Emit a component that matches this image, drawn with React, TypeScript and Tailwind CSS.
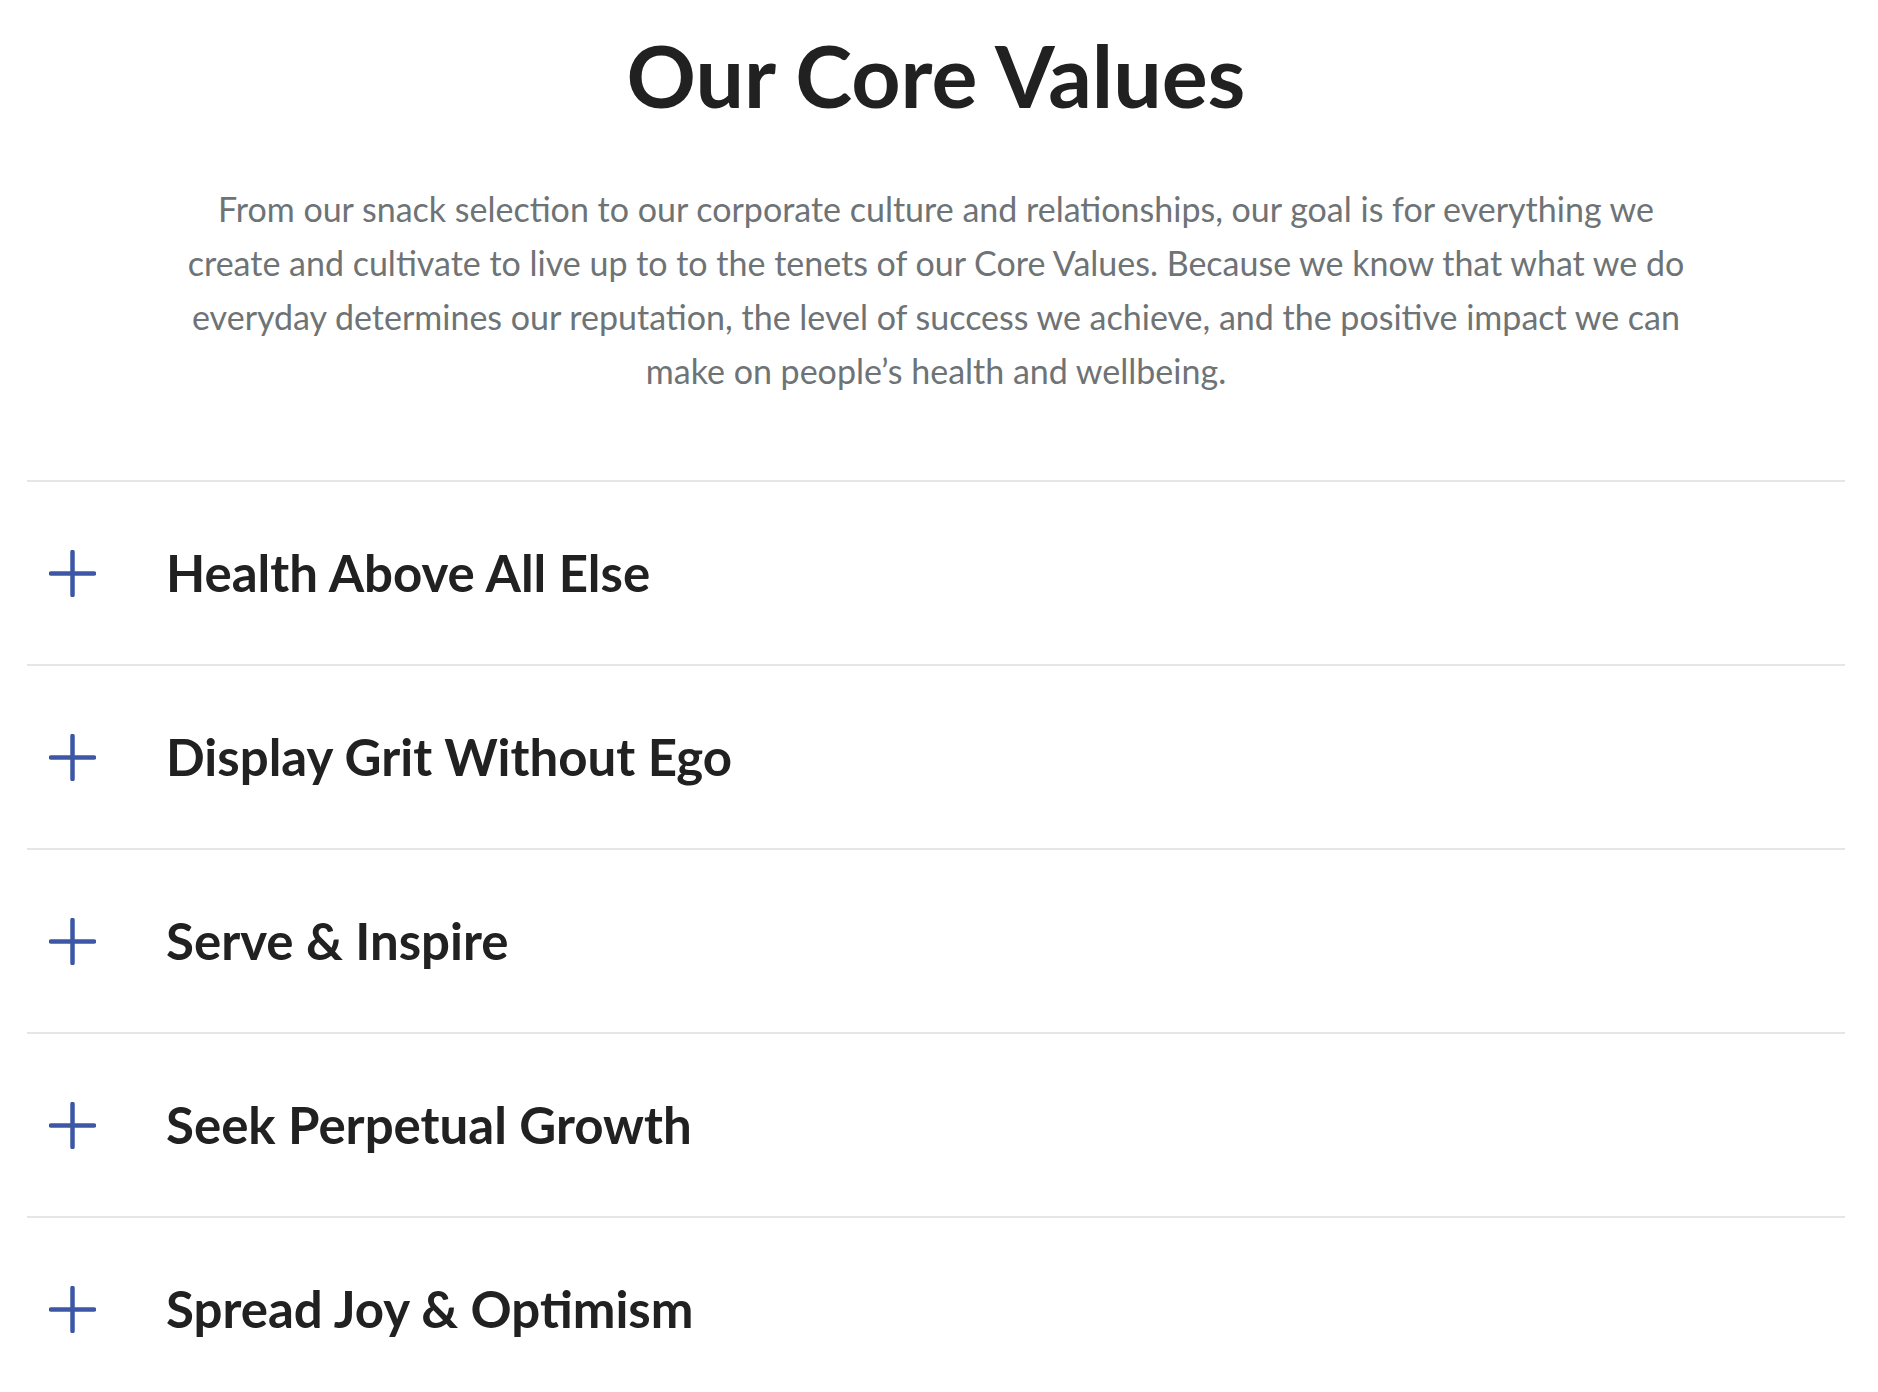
import React from 'react';

const values = [
  'Health Above All Else',
  'Display Grit Without Ego',
  'Serve & Inspire',
  'Seek Perpetual Growth',
  'Spread Joy & Optimism',
];

function PlusIcon() {
  return (
    <svg width="47" height="47" viewBox="0 0 47 47" className="shrink-0">
      <path d="M23.5 2v43M2 23.5h43" stroke="#3d57a6" strokeWidth="4.5" strokeLinecap="round" />
    </svg>
  );
}

export default function App() {
  return (
    <div className="min-h-screen bg-white font-['Lato','Liberation_Sans',sans-serif]">
      <div className="ml-[27px] w-[1818px] pt-[30px]">
        <h2 className="text-center text-[86px] font-bold leading-[90px] text-[#212121]">Our Core Values</h2>

        <p className="mx-auto mt-[62px] w-[1600px] text-center text-[34px] leading-[54px] text-[#6e7376]">
          From our snack selection to our corporate culture and relationships, our goal is for everything we
          <br />
          create and cultivate to live up to to the tenets of our Core Values. Because we know that what we do
          <br />
          everyday determines our reputation, the level of success we achieve, and the positive impact we can
          <br />
          make on people’s health and wellbeing.
        </p>

        <div className="mt-[82px]">
          {values.map((v) => (
            <div key={v} className="flex h-[184px] items-center border-t-2 border-[#e6e6e6] pl-[22px]">
              <PlusIcon />
              <span className="ml-[70px] text-[51px] font-bold text-[#212121]">{v}</span>
            </div>
          ))}
        </div>
      </div>
    </div>
  );
}
